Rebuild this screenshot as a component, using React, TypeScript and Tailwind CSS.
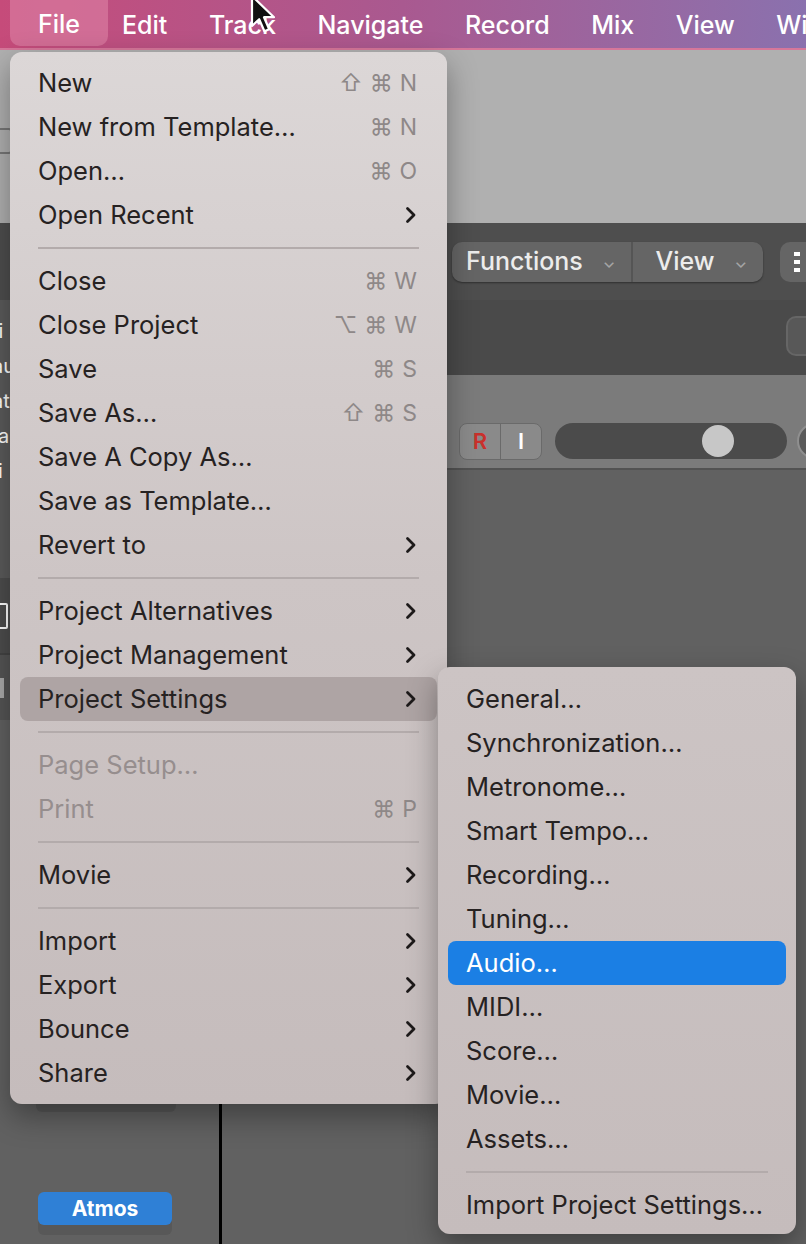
import React from "react";

type Row =
  | { sep: true }
  | {
      sep?: false;
      label: string;
      keys?: string[];
      sub?: boolean;
      disabled?: boolean;
      active?: "gray" | "blue";
    };

const SEP: Row = { sep: true };

const fileMenu: Row[] = [
  { label: "New", keys: ["⇧", "⌘", "N"] },
  { label: "New from Template…", keys: ["⌘", "N"] },
  { label: "Open…", keys: ["⌘", "O"] },
  { label: "Open Recent", sub: true },
  SEP,
  { label: "Close", keys: ["⌘", "W"] },
  { label: "Close Project", keys: ["⌥", "⌘", "W"] },
  { label: "Save", keys: ["⌘", "S"] },
  { label: "Save As…", keys: ["⇧", "⌘", "S"] },
  { label: "Save A Copy As…" },
  { label: "Save as Template…" },
  { label: "Revert to", sub: true },
  SEP,
  { label: "Project Alternatives", sub: true },
  { label: "Project Management", sub: true },
  { label: "Project Settings", sub: true, active: "gray" },
  SEP,
  { label: "Page Setup…", disabled: true },
  { label: "Print", keys: ["⌘", "P"], disabled: true },
  SEP,
  { label: "Movie", sub: true },
  SEP,
  { label: "Import", sub: true },
  { label: "Export", sub: true },
  { label: "Bounce", sub: true },
  { label: "Share", sub: true },
];

const settingsMenu: Row[] = [
  { label: "General…" },
  { label: "Synchronization…" },
  { label: "Metronome…" },
  { label: "Smart Tempo…" },
  { label: "Recording…" },
  { label: "Tuning…" },
  { label: "Audio…", active: "blue" },
  { label: "MIDI…" },
  { label: "Score…" },
  { label: "Movie…" },
  { label: "Assets…" },
  SEP,
  { label: "Import Project Settings…" },
];

function Chevron() {
  return (
    <svg width="12" height="18" viewBox="0 0 12 18" className="shrink-0">
      <path d="M2.5 2.5 L9 9 L2.5 15.5" fill="none" stroke="#1d1a1a" strokeWidth="2.8" strokeLinecap="round" strokeLinejoin="round" />
    </svg>
  );
}

function MenuRows({ rows }: { rows: Row[] }) {
  return (
    <>
      {rows.map((r, i) => {
        if (r.sep) {
          return (
            <div key={i} className="h-[22px] flex items-center px-[18px]">
              <div className="h-[2px] w-full bg-[#b3abab]" />
            </div>
          );
        }
        const bg =
          r.active === "gray" ? "bg-[#aea4a4]" : r.active === "blue" ? "bg-[#1b7fe4]" : "";
        const color = r.disabled ? "text-[#968e8e]" : r.active === "blue" ? "text-white" : "text-[#262222]";
        return (
          <div key={i} className={`h-[44px] flex items-center pl-[18px] pr-[20px] rounded-[8px] ${bg} ${color}`}>
            <span className="flex-1 whitespace-nowrap">{r.label}</span>
            {r.keys && (
              <span className="flex items-center gap-[7px] text-[23px] text-[#8e8888] font-['Inter','DejaVu_Sans',sans-serif]">
                {r.keys.map((k, j) => (
                  <span key={j}>{k}</span>
                ))}
              </span>
            )}
            {r.sub && <Chevron />}
          </div>
        );
      })}
    </>
  );
}

function Cursor() {
  return (
    <svg width="30" height="42" viewBox="0 0 15 21" className="absolute left-[250px] top-[-6px]">
      <path d="M1 1 L1 16 L4.6 12.6 L7.2 18.6 L9.6 17.6 L7 11.6 L12 11.6 Z" fill="#111" stroke="#fff" strokeWidth="1.1" strokeLinejoin="round" />
    </svg>
  );
}

export default function App() {
  return (
    <div className="relative w-[806px] h-[1244px] overflow-hidden bg-[#616161] font-['Inter','Noto_Sans',sans-serif] flex flex-col">
      {/* menu bar */}
      <div className="h-[50px] shrink-0 flex items-start bg-gradient-to-r from-[#c64b7a] via-[#a95990] to-[#8a71ae] border-b-2 border-[#d6779a] text-white text-[25px] font-medium">
        <div className="ml-[10px] h-[46px] px-[28px] pt-[3px] flex items-center rounded-b-[10px] bg-[#d97aa0]/70">File</div>
        <div className="h-[48px] pt-[3px] flex items-center gap-[41.5px] ml-[14px] whitespace-nowrap">
          <span>Edit</span>
          <span>Track</span>
          <span>Navigate</span>
          <span>Record</span>
          <span>Mix</span>
          <span>View</span>
          <span>Window</span>
        </div>
      </div>

      {/* light control bar area */}
      <div className="h-[173px] shrink-0 bg-[#b0b0b0] flex items-center">
        <div className="w-[24px] h-[26px] -ml-[12px] mt-[8px] rounded-[3px] border-2 border-[#777]" />
      </div>

      {/* toolbar */}
      <div className="h-[77px] shrink-0 bg-[#4e4e4e] flex items-start pt-[19px] pl-[452px] gap-[17px] text-[#ececec] text-[25px] font-medium">
        <div className="h-[40px] shrink-0 flex items-center rounded-[10px] bg-[#656565] shadow-[0_1px_2px_rgba(0,0,0,0.4)]">
          <div className="flex items-center h-full pl-[14px] pr-[16px] gap-[20px] border-r-2 border-[#555]">
            <span>Functions</span>
            <span className="text-[#a5a5a5] text-[16px]">⌄</span>
          </div>
          <div className="flex items-center h-full pl-[22px] pr-[16px] gap-[20px]">
            <span>View</span>
            <span className="text-[#a5a5a5] text-[16px]">⌄</span>
          </div>
        </div>
        <div className="h-[40px] w-[40px] shrink-0 rounded-[10px] bg-[#656565] flex flex-col justify-center gap-[4px] pl-[14px]">
          <div className="w-[6px] h-[4px] bg-white" />
          <div className="w-[6px] h-[4px] bg-white" />
          <div className="w-[6px] h-[4px] bg-white" />
        </div>
      </div>

      {/* lower window */}
      <div className="flex flex-1 min-w-0">
        <aside className="w-[219px] shrink-0 flex flex-col">
          <div className="h-[278px] bg-[#5b5b5b] flex flex-col pt-[20px] gap-[13px] text-white text-[20px] leading-[22px] -ml-[8px]">
            <span>ti</span>
            <span>au</span>
            <span>at</span>
            <span className="pl-[6px]">a</span>
            <span className="pl-[6px]">i</span>
          </div>
          <div className="h-[77px] bg-[#4d4d4d] flex items-center border-b-2 border-[#444]">
            <div className="w-[10px] h-[26px] -ml-[2px] border-2 border-white rounded-[2px]" />
          </div>
          <div className="h-[65px] bg-[#555] flex items-center">
            <div className="w-[4px] h-[20px] bg-[#aaa]" />
          </div>
          <div className="flex-1 bg-[#616161] flex flex-col items-start pl-[36px]">
            <div className="mt-[358px] w-[140px] h-[34px] rounded-[6px] bg-[#575757]" />
            <div className="mt-[80px] ml-[2px] w-[134px] h-[33px] rounded-[6px] bg-[#2f80d6] text-white text-[21px] font-bold flex items-center justify-center shadow-[0_10px_0_#585858]">
              Atmos
            </div>
          </div>
        </aside>
        <div className="w-[3px] shrink-0 bg-black" />
        <main className="flex-1 min-w-0 flex flex-col overflow-hidden">
          <div className="h-[75px] bg-[#4a4a4a] flex justify-end pt-[16px]">
            <div className="w-[20px] h-[40px] rounded-l-[10px] bg-[#585858] border-2 border-r-0 border-[#666]" />
          </div>
          <div className="h-[95px] bg-[#7b7b7b] border-b-2 border-[#525252] flex items-start pt-[48px] pl-[237px] gap-[13px]">
            <div className="h-[37px] shrink-0 flex items-center rounded-[8px] bg-[#8a8a8a] border border-[#6a6a6a] text-[22px] font-semibold">
              <span className="w-[41px] h-full flex items-center justify-center text-[#c9302c] border-r border-[#6a6a6a]">R</span>
              <span className="w-[40px] h-full flex items-center justify-center text-white">I</span>
            </div>
            <div className="w-[232px] h-[36px] shrink-0 rounded-full bg-[#4b4b4b] flex items-center pl-[147px]">
              <div className="w-[32px] h-[32px] rounded-full bg-[#c7c7c7]" />
            </div>
            <div className="w-[36px] h-[36px] shrink-0 -ml-[3px] rounded-full bg-[#5a5a5a] border-2 border-[#8f8f8f]" />
          </div>
          <div className="flex-1 bg-[#616161]" />
        </main>
      </div>

      {/* File menu */}
      <div className="absolute left-[10px] top-[52px] w-[437px] pt-[9px] pb-[9px] px-[10px] rounded-[12px] bg-gradient-to-b from-[#dcd7d7] via-[#cdc5c5] to-[#c5bcbc] shadow-[0_12px_30px_rgba(0,0,0,0.35)] text-[25.5px]">
        <MenuRows rows={fileMenu} />
      </div>

      {/* Project Settings submenu */}
      <div className="absolute left-[438px] top-[667px] w-[358px] pt-[10px] pb-[7px] px-[10px] rounded-[12px] bg-gradient-to-b from-[#ccc4c4] to-[#c5bcbc] shadow-[0_12px_30px_rgba(0,0,0,0.35)] text-[25.5px]">
        <MenuRows rows={settingsMenu} />
      </div>

      <Cursor />
    </div>
  );
}
